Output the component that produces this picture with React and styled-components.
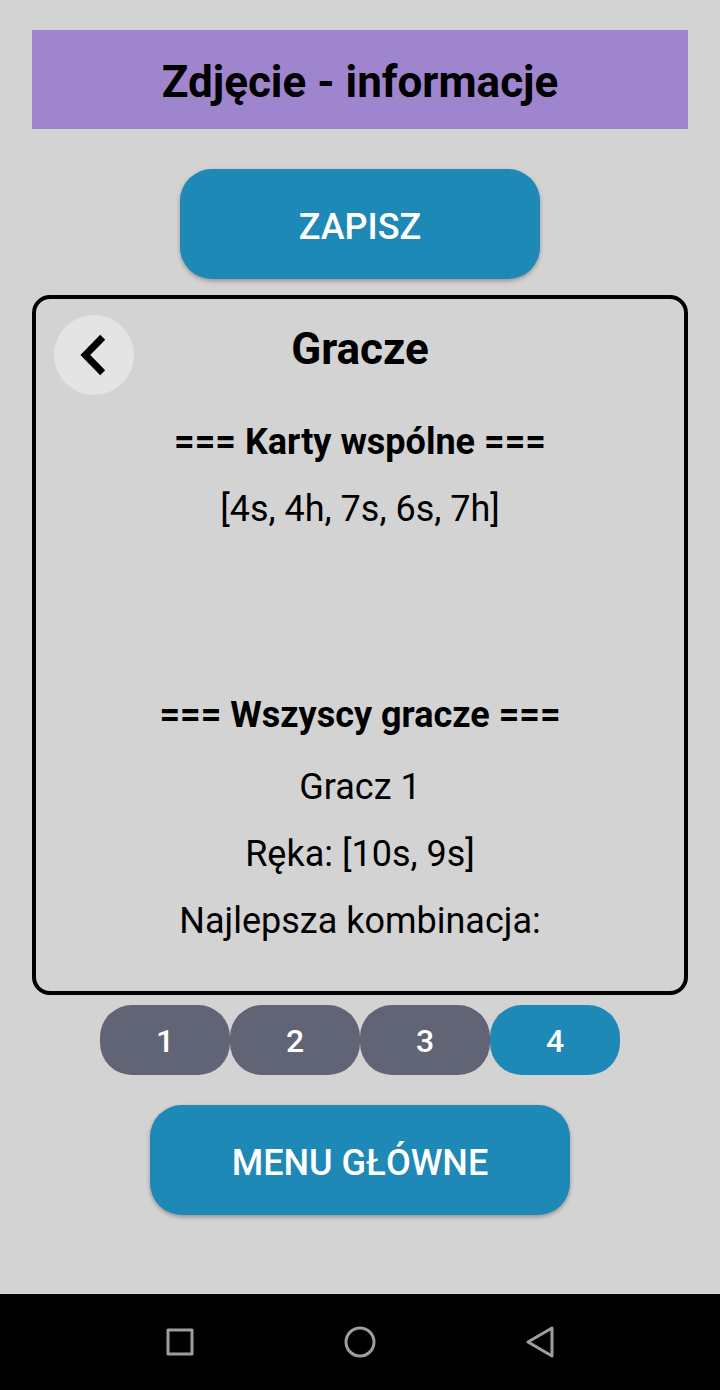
import React, { useState } from "react";
import styled, { createGlobalStyle } from "styled-components";

const Global = createGlobalStyle`
  * { box-sizing: border-box; }
  body { margin: 0; background: #d3d3d3; color: #000; font-family: Roboto, sans-serif; }
  button { border: 0; padding: 0; font-family: inherit; cursor: pointer; }
`;

const Screen = styled.div`
  min-height: 100vh;
  display: flex;
  flex-direction: column;
`;

const Content = styled.main`
  flex: 1;
  display: flex;
  flex-direction: column;
  align-items: center;
  padding: 30px 32px;
`;

const Title = styled.h1`
  width: 100%;
  margin: 0 0 40px;
  padding: 23px 0 17px;
  background: #9f84ce;
  font-size: 44px;
  line-height: 59px;
  font-weight: 700;
  text-align: center;
`;

const ActionButton = styled.button`
  width: ${(p) => (p.$wide ? 420 : 360)}px;
  max-width: 100%;
  height: 110px;
  border-radius: 32px;
  background: #1e88b7;
  color: #fff;
  font-size: 36px;
  font-weight: 500;
  padding-top: 6px;
  box-shadow: 0 2px 4px rgba(0, 0, 0, 0.3);
`;

const Panel = styled.section`
  width: 100%;
  min-height: 700px;
  margin: 16px 0 10px;
  padding: 16px 18px;
  border: 4px solid #000;
  border-radius: 18px;
  text-align: center;
`;

const PanelHeader = styled.header`
  display: grid;
  grid-template-columns: 80px 1fr 80px;
  align-items: start;
`;

const BackButton = styled.button`
  width: 80px;
  height: 80px;
  border-radius: 50%;
  background: #e4e4e4;
  display: grid;
  place-items: center;
`;

const PanelTitle = styled.h2`
  margin: 0;
  font-size: 44px;
  line-height: 68px;
  font-weight: 700;
`;

const Group = styled.div`
  padding-top: 23px;
  & + & { margin-top: 135px; }
`;

const GroupTitle = styled.h3`
  margin: 0;
  font-size: 36px;
  line-height: 48px;
  font-weight: 700;
`;

const Player = styled.div`
  padding-top: 5px;
`;

const Line = styled.p`
  margin: 0;
  font-size: 36px;
  line-height: 48px;
  padding-top: 19px;
`;

const Pager = styled.nav`
  display: flex;
  margin-bottom: 30px;
`;

const PageButton = styled.button`
  width: 130px;
  height: 70px;
  border-radius: 32px;
  background: ${(p) => (p.$active ? "#1e88b7" : "#616474")};
  color: #fff;
  font-size: 32px;
  font-weight: 500;
  padding-top: 2px;
`;

const SystemBar = styled.footer`
  height: 96px;
  background: #000;
  display: flex;
  justify-content: center;
  gap: 100px;
`;

const SystemButton = styled.button`
  width: 80px;
  background: none;
  display: grid;
  place-items: center;
`;

const SystemIcon = ({ children }) => (
  <svg width="32" height="32" viewBox="0 0 32 32" fill="none" stroke="#9e9e9e" strokeWidth="3" strokeLinejoin="round">
    {children}
  </svg>
);

export default function App() {
  const [page, setPage] = useState(4);
  return (
    <Screen>
      <Global />
      <Content>
        <Title>Zdjęcie - informacje</Title>
        <ActionButton>ZAPISZ</ActionButton>
        <Panel>
          <PanelHeader>
            <BackButton aria-label="Wstecz">
              <svg width="80" height="80" viewBox="0 0 80 80" fill="none" stroke="#000" strokeWidth="7">
                <path d="M48.700 22.300L31.300 40L48.700 57.700" />
              </svg>
            </BackButton>
            <PanelTitle>Gracze</PanelTitle>
          </PanelHeader>
          <Group>
            <GroupTitle>=== Karty wspólne ===</GroupTitle>
            <Line>[4s, 4h, 7s, 6s, 7h]</Line>
          </Group>
          <Group>
            <GroupTitle>=== Wszyscy gracze ===</GroupTitle>
            <Player>
              <Line>Gracz 1</Line>
              <Line>Ręka: [10s, 9s]</Line>
              <Line>Najlepsza kombinacja:</Line>
            </Player>
          </Group>
        </Panel>
        <Pager aria-label="Strony">
          {[1, 2, 3, 4].map((n) => (
            <PageButton
              key={n}
              $active={n === page}
              aria-current={n === page ? "page" : undefined}
              onClick={() => setPage(n)}
            >
              {n}
            </PageButton>
          ))}
        </Pager>
        <ActionButton $wide>MENU GŁÓWNE</ActionButton>
      </Content>
      <SystemBar>
        <SystemButton aria-label="Ostatnie">
          <SystemIcon><rect x="4" y="4" width="24" height="24" /></SystemIcon>
        </SystemButton>
        <SystemButton aria-label="Ekran główny">
          <SystemIcon><circle cx="16" cy="16" r="14" /></SystemIcon>
        </SystemButton>
        <SystemButton aria-label="Powrót">
          <SystemIcon><path d="M28 2V30L4 16Z" /></SystemIcon>
        </SystemButton>
      </SystemBar>
    </Screen>
  );
}
